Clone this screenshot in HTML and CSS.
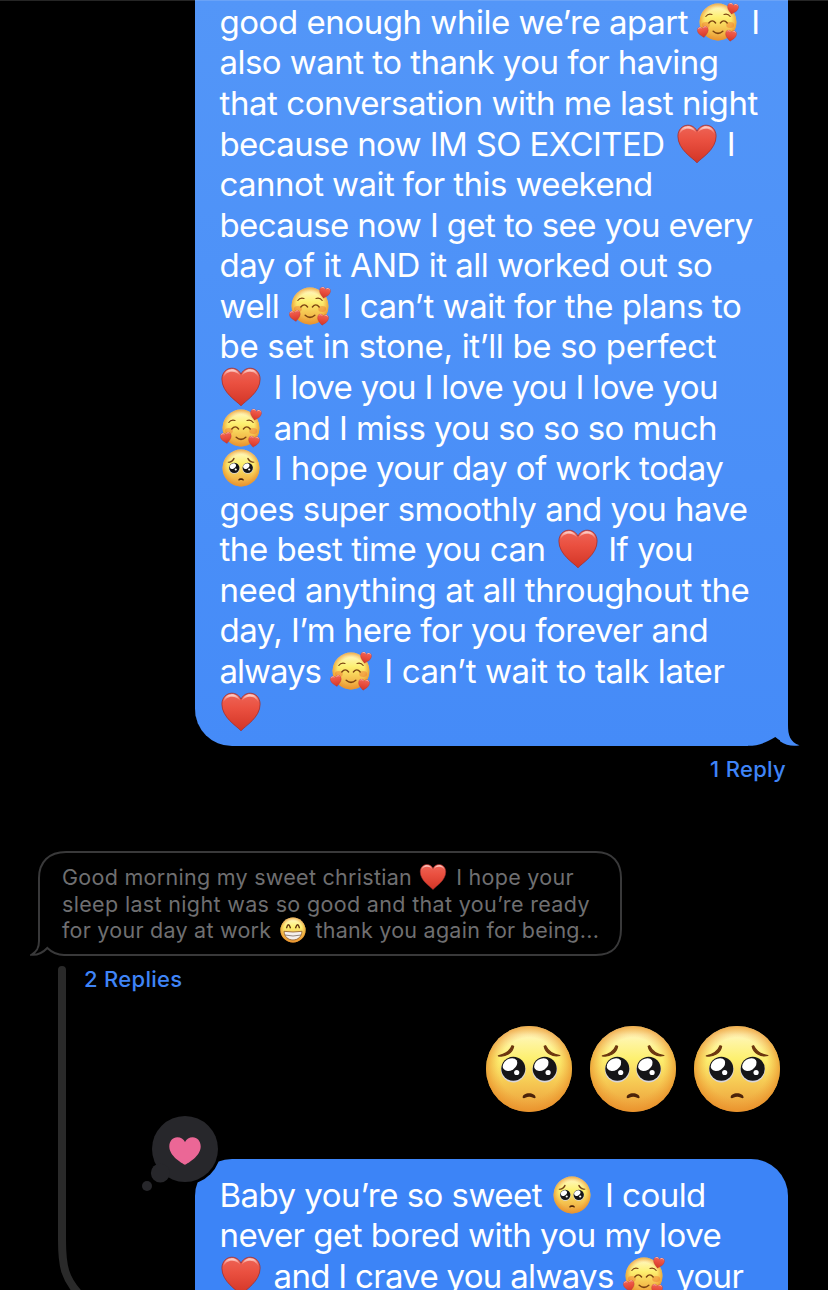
FILE: index.html
```html
<!DOCTYPE html>
<html lang="en">
<head>
<meta charset="utf-8">
<title>Messages</title>
<link rel="stylesheet" href="styles.css">
</head>
<body>
<svg class="defs" aria-hidden="true">
  <defs>
    <linearGradient id="faceFill" x1="0" y1="0" x2="0" y2="1">
      <stop offset="0" stop-color="#fde998"/><stop offset=".1" stop-color="#fff6b8"/>
      <stop offset=".38" stop-color="#fdf070"/><stop offset=".65" stop-color="#f6ca54"/>
      <stop offset="1" stop-color="#ec9c38"/>
    </linearGradient>
    <radialGradient id="faceEdge" cx=".5" cy=".49" r=".52">
      <stop offset=".68" stop-color="#f0a038" stop-opacity="0"/>
      <stop offset="1" stop-color="#e88f28" stop-opacity=".85"/>
    </radialGradient>
    <linearGradient id="heartFill" x1="0" y1="0" x2="0" y2="1">
      <stop offset="0" stop-color="#ee6557"/><stop offset=".4" stop-color="#ea5040"/>
      <stop offset="1" stop-color="#d23526"/>
    </linearGradient>
    <linearGradient id="shine" x1="0" y1="0" x2="0" y2="1">
      <stop offset="0" stop-color="#ffe4e0" stop-opacity=".95"/><stop offset="1" stop-color="#ffb0a6" stop-opacity="0"/>
    </linearGradient>
    <symbol id="heart" viewBox="0 0 42 42">
      <path d="M21 39.800C16.500 34.800 1.900 26.500 1.900 13.200C1.900 6.600 6.500 2.200 11.800 2.200C16 2.200 19.400 4.600 21 8.200C22.600 4.600 26 2.200 30.200 2.200C35.500 2.200 40.100 6.600 40.100 13.200C40.100 26.500 25.500 34.800 21 39.800Z" fill="url(#heartFill)" stroke="#a3302f" stroke-width=".8"/>
      <path d="M3.400 12C3.400 6.600 7.500 3.300 11.800 3.300C15.800 3.300 18.700 5.700 20 9.500C17.800 7 15 5.800 12 5.800C8 5.800 5 8 3.400 12Z" fill="url(#shine)"/>
      <path d="M38.600 12C38.600 6.600 34.500 3.300 30.200 3.300C26.200 3.300 23.300 5.700 22 9.500C24.200 7 27 5.800 30 5.800C34 5.800 37 8 38.600 12Z" fill="url(#shine)"/>
    </symbol>
    <symbol id="pleading" viewBox="0 0 98 98">
      <circle cx="49" cy="49" r="43" fill="url(#faceFill)"/>
      <circle cx="49" cy="49" r="43" fill="url(#faceEdge)"/>
      <g fill="#6c3710" stroke="#6c3710" stroke-width="1.200" stroke-linejoin="round">
        <path d="M18.300 35.800C25 34.500 30 31 32 25.700L33.600 26.300C32.500 33 25.500 37.200 18.300 35.800Z"/>
        <path d="M79.900 35.500C73 34.500 68 31 65.600 25.700L64.200 26.300C65.500 33 72.500 37.200 79.900 35.500Z"/>
      </g>
      <g fill="#d8d5da"><circle cx="33.300" cy="50" r="12.400"/><circle cx="64.700" cy="50" r="12.400"/></g>
      <g fill="#151517"><circle cx="33.300" cy="48.700" r="12"/><circle cx="64.700" cy="48.700" r="12"/></g>
      <g fill="#fff">
        <ellipse cx="30" cy="44.600" rx="7.800" ry="5.700" transform="rotate(-33 30 44.600)"/>
        <ellipse cx="61.400" cy="44.600" rx="7.800" ry="5.700" transform="rotate(-33 61.400 44.600)"/>
        <circle cx="36.700" cy="52.500" r="2.600"/><circle cx="68.100" cy="52.500" r="2.600"/>
      </g>
      <path d="M42.700 77.800C42 71.600 56 71.600 55.600 77.800C54.500 79.300 52.500 76.800 49.200 76.800S44 79.300 42.700 77.800Z" fill="#4c230a"/>
    </symbol>
    <symbol id="adore" viewBox="0 0 42 42">
      <circle cx="21" cy="21" r="18.400" fill="url(#faceFill)"/>
      <circle cx="21" cy="21" r="18.400" fill="url(#faceEdge)"/>
      <g fill="#ee6b2a" opacity=".4"><ellipse cx="8.800" cy="24" rx="4" ry="3"/><ellipse cx="33.200" cy="24" rx="4" ry="3"/></g>
      <g fill="none" stroke="#7b4210" stroke-linecap="round">
        <path d="M8.800 15.500Q11 12.300 15 13.500M27 13.500Q31 12.300 33.200 15.500" stroke-width="1.100"/>
        <path d="M11.800 22Q15.300 17.800 18.600 22M23.400 22Q26.800 17.800 30.200 22" stroke-width="1.400"/>
        <path d="M16.200 30.300Q21 34.400 25.800 30.300" stroke-width="1.500"/>
      </g>
      <use href="#heart" x="29.500" y="1.800" width="12.200" height="12.200" transform="rotate(12 35.600 7.900)"/>
      <use href="#heart" x="0" y="25" width="12.200" height="12.200" transform="rotate(-10 6 31)"/>
      <use href="#heart" x="27.700" y="28.800" width="12.200" height="12.200" transform="rotate(8 33.800 34.900)"/>
    </symbol>
    <symbol id="grin" viewBox="0 0 42 42">
      <circle cx="21" cy="21" r="18.800" fill="url(#faceFill)"/>
      <circle cx="21" cy="21" r="18.800" fill="url(#faceEdge)"/>
      <path d="M11.500 17.500Q14 9 17 17.500M25 17.500Q28 9 30.500 17.500" fill="none" stroke="#63330f" stroke-width="2.200" stroke-linecap="round"/>
      <path d="M7.500 23Q21 25 34.500 23C34 31 28.500 36 21 36S8 31 7.500 23Z" fill="#f4efec" stroke="#94602f" stroke-width="1.300"/>
      <path d="M8.800 28.500Q21 31.500 33.200 28.500" fill="none" stroke="#8b7d73" stroke-width="1.400"/>
    </symbol>
  </defs>
</svg>

<main class="chat">
  <section class="bubble bubble-first">
    <p class="line l1">good enough while we’re apart <svg class="emoji"><use href="#adore"/></svg> I</p>
    <p class="line l2">also want to thank you for having</p>
    <p class="line l3">that conversation with me last night</p>
    <p class="line l4">because now IM SO EXCITED <svg class="emoji"><use href="#heart"/></svg> I</p>
    <p class="line l5">cannot wait for this weekend</p>
    <p class="line l6">because now I get to see you every</p>
    <p class="line l7">day of it AND it all worked out so</p>
    <p class="line l8">well <svg class="emoji"><use href="#adore"/></svg> I can’t wait for the plans to</p>
    <p class="line l9">be set in stone, it’ll be so perfect</p>
    <p class="line l10"><svg class="emoji"><use href="#heart"/></svg> I love you I love you I love you</p>
    <p class="line l11"><svg class="emoji"><use href="#adore"/></svg> and I miss you so so so much</p>
    <p class="line l12"><svg class="emoji"><use href="#pleading"/></svg> I hope your day of work today</p>
    <p class="line l13">goes super smoothly and you have</p>
    <p class="line l14">the best time you can <svg class="emoji"><use href="#heart"/></svg> If you</p>
    <p class="line l15">need anything at all throughout the</p>
    <p class="line l16">day, I’m here for you forever and</p>
    <p class="line l17"><span class="tight">always</span> <svg class="emoji"><use href="#adore"/></svg> I can’t wait to talk later</p>
    <p class="line"><svg class="emoji"><use href="#heart"/></svg></p>
    <svg class="tail" viewBox="0 0 60 22">
      <path d="M8 22V20.800C18 20.700 26 18 35.300 12C43 18.500 50 20.500 59.500 20.500V22Z" fill="#000"/>
      <path d="M48 0C48 10 50 17 59.500 20.300C54 21.400 46 21 40 16.300V0Z" fill="#468bf8"/>
    </svg>
  </section>
  <div class="reply-count reply-right">1 Reply</div>

  <section class="quote">
    <svg class="quote-outline" viewBox="0 0 594 108">
      <path d="M36 3H566C583 3 591 14 591 29V80C591 96 583 106 566 106H34C27 106 22 103.500 17.300 99C12 104.500 7 106.300 1.500 105.800C7 102.500 9 99 9 92V29C9 13 19 3 36 3Z" fill="none" stroke="#39393a" stroke-width="2"/>
    </svg>
    <p class="quote-line q1">Good morning my sweet christian <svg class="emoji-small"><use href="#heart"/></svg> I hope your</p>
    <p class="quote-line q2">sleep last night was so good and that you’re ready</p>
    <p class="quote-line q3">for your day at work <svg class="emoji-small"><use href="#grin"/></svg> thank you again for being...</p>
  </section>

  <section class="thread">
    <svg class="thread-line" viewBox="0 0 40 326"><path d="M7 6V276C7 303 10 315 25 331" fill="none" stroke="#2a2a2a" stroke-width="8" stroke-linecap="round"/></svg>
    <div class="thread-body">
      <div class="reply-count reply-left">2 Replies</div>
      <div class="big-emojis">
        <svg><use href="#pleading"/></svg><svg><use href="#pleading"/></svg><svg><use href="#pleading"/></svg>
      </div>
      <div class="bubble bubble-second">
        <p class="line b1">Baby you’re so sweet <svg class="emoji"><use href="#pleading"/></svg> I could</p>
        <p class="line b2">never get bored with you my love</p>
        <p class="line b3"><svg class="emoji"><use href="#heart"/></svg> and I crave you always <svg class="emoji"><use href="#adore"/></svg> your</p>
        <svg class="reaction" viewBox="0 0 84 80">
          <circle cx="45" cy="36" r="35.800" fill="#000"/>
          <g fill="#27272b"><circle cx="45" cy="36" r="33"/><circle cx="20.300" cy="60" r="9.400"/><circle cx="7" cy="73" r="5"/></g>
          <path d="M45 51.800C42 50.300 29.300 43 29.300 33.500C29.300 28 32.800 24.200 37.300 24.200C40.800 24.200 43.500 26 45 29C46.500 26 49.200 24.200 52.700 24.200C57.200 24.200 60.700 28 60.700 33.500C60.700 43 48 50.300 45 51.800Z" fill="#eb6796"/>
        </svg>
      </div>
    </div>
  </section>
</main>
</body>
</html>
```
FILE: styles.css
```css
* { box-sizing: border-box; }
html, body { margin: 0; background: #000; }
p { margin: 0; }
.defs { position: absolute; width: 0; height: 0; }

.chat {
  width: 828px;
  height: 1290px;
  overflow: hidden;
  background: linear-gradient(#252525 1px, #000 1px);
  font-family: Inter, "Noto Sans", sans-serif;
}

.bubble {
  position: relative;
  width: 593px;
  padding-left: 24.500px;
  color: #fff;
  font-size: 33px;
  white-space: nowrap;
}
.bubble-first {
  height: 746px;
  margin-left: 195px;
  padding-top: 1.800px;
  border-radius: 0 0 0 37px;
  background: linear-gradient(#5396f8, #458bf8);
  box-shadow: inset 0 1px #6aa3f7;
}
.line { height: 40.580px; line-height: 40.580px; letter-spacing: -.53px; }
/* optical tracking per line */
.l1 { letter-spacing: -.46px; }
.l3 { letter-spacing: -.42px; }
.l4 { letter-spacing: -.62px; }
.l5 { letter-spacing: -.57px; }
.l6 { letter-spacing: -.6px; }
.l7 { letter-spacing: -.5px; }
.l8 { letter-spacing: -.46px; }
.l9 { letter-spacing: -.31px; }
.l10 { letter-spacing: -.66px; }
.l11 { letter-spacing: -.58px; }
.l12 { letter-spacing: -.57px; }
.l14 { letter-spacing: -.46px; }
.l15 { letter-spacing: -.4px; }
.l17 { letter-spacing: -.4px; }
.b3 { letter-spacing: -.7px; }
.tight { letter-spacing: -1px; }
.emoji {
  width: 42px;
  height: 42px;
  margin: -4px 3px -4px .500px;
  vertical-align: -5px;
}
.l4 .emoji, .l14 .emoji { margin-left: 3px; margin-right: 0; }
.tail { position: absolute; left: 545px; bottom: -1px; width: 60px; height: 22px; }

.reply-count { color: #3f84f7; font-size: 22px; font-weight: 500; line-height: 28px; letter-spacing: .3px; }
.reply-right { margin: 9px 42px 0 0; text-align: right; }

.quote {
  position: relative;
  width: 594px;
  height: 108px;
  margin: 66px 0 0 30px;
  padding: 15px 0 0 32px;
  color: #6f6f71;
  font-size: 21.500px;
  letter-spacing: .28px;
  white-space: nowrap;
}
.quote-outline { position: absolute; left: 0; top: 0; width: 594px; height: 108px; }
.quote-line { height: 26.600px; line-height: 26.600px; }
.q2 { letter-spacing: .34px; }
.q3 { letter-spacing: .25px; }
.emoji-small { width: 28px; height: 28px; margin: -4px 2.500px -4px 1px; vertical-align: -2px; }

.thread { display: flex; height: 326px; margin-top: 7px; padding-left: 55px; }
.thread-line { flex: none; width: 40px; height: 326px; margin-right: -11px; overflow: visible; }
.thread-body { width: 704px; padding-top: 1px; }
.big-emojis { display: flex; justify-content: flex-end; gap: 6px; margin: 27px 2px 0 0; }
.big-emojis svg { width: 98px; height: 98px; }
.bubble-second {
  height: 180px;
  margin: 41px 0 0 111px;
  padding-top: 15.500px;
  border-radius: 37px 37px 0 0;
  background: #3c84f7;
}
.reaction { position: absolute; left: -55px; top: -46px; width: 84px; height: 80px; }
```
